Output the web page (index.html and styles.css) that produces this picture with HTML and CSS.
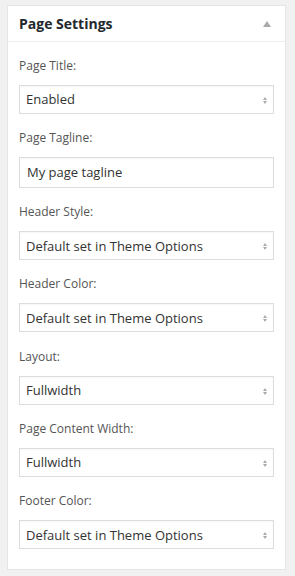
FILE: index.html
```html
<!DOCTYPE html>
<html lang="en">
<head>
    <meta charset="UTF-8">
    <title>Page Settings</title>
    <link rel="stylesheet" href="styles.css">
</head>
<body>
    <div class="postbox">
        <div class="postbox-header">
            <h3>Page Settings</h3>
            <span class="toggle"></span>
        </div>
        <div class="inside">
            <div class="field">
                <label for="page-title">Page Title:</label>
                <div class="select-wrap">
                    <select id="page-title">
                        <option>Enabled</option>
                        <option>Disabled</option>
                    </select>
                </div>
            </div>
            <div class="field">
                <label for="page-tagline">Page Tagline:</label>
                <input type="text" id="page-tagline" value="My page tagline">
            </div>
            <div class="field">
                <label for="header-style">Header Style:</label>
                <div class="select-wrap">
                    <select id="header-style">
                        <option>Default set in Theme Options</option>
                    </select>
                </div>
            </div>
            <div class="field">
                <label for="header-color">Header Color:</label>
                <div class="select-wrap">
                    <select id="header-color">
                        <option>Default set in Theme Options</option>
                    </select>
                </div>
            </div>
            <div class="field">
                <label for="layout">Layout:</label>
                <div class="select-wrap">
                    <select id="layout">
                        <option>Fullwidth</option>
                    </select>
                </div>
            </div>
            <div class="field">
                <label for="content-width">Page Content Width:</label>
                <div class="select-wrap">
                    <select id="content-width">
                        <option>Fullwidth</option>
                    </select>
                </div>
            </div>
            <div class="field">
                <label for="footer-color">Footer Color:</label>
                <div class="select-wrap">
                    <select id="footer-color">
                        <option>Default set in Theme Options</option>
                    </select>
                </div>
            </div>
        </div>
    </div>
</body>
</html>
```

FILE: styles.css
```css
body {
    margin: 5px 9px 0 7px;
    background-color: #f1f1f1;
    font-family: "Open Sans", sans-serif;
    font-size: 12px;
    color: #444;
}
.postbox {
    background-color: #fff;
    border: 1px solid #e5e5e5;
    box-shadow: 0 1px 1px rgba(0, 0, 0, 0.04);
}
.postbox-header {
    display: flex;
    align-items: center;
    justify-content: space-between;
    height: 35px;
    padding: 0 14px 0 11px;
    border-bottom: 1px solid #eee;
}
.postbox-header h3 {
    margin: 0;
    font-size: 14px;
    font-weight: 700;
    color: #23282d;
    line-height: 1;
}
.toggle {
    width: 0;
    height: 0;
    border-left: 4px solid transparent;
    border-right: 4px solid transparent;
    border-bottom: 6px solid #aaa;
    margin-top: 1px;
}
.inside {
    padding: 14.5px 11px 20px;
}
.field + .field {
    margin-top: 15.25px;
}
label {
    display: block;
    line-height: 18px;
    margin-bottom: 10px;
    color: #555;
}
.select-wrap {
    position: relative;
}
.select-wrap::before,
.select-wrap::after {
    content: "";
    position: absolute;
    right: 7px;
    width: 0;
    height: 0;
    border-left: 2.5px solid transparent;
    border-right: 2.5px solid transparent;
    pointer-events: none;
}
.select-wrap::before {
    top: 12px;
    border-bottom: 3px solid #aaa;
}
.select-wrap::after {
    top: 16px;
    border-top: 3px solid #aaa;
}
select,
input[type="text"] {
    display: block;
    box-sizing: border-box;
    width: 100%;
    margin: 0;
    padding: 0 6px;
    border: 1px solid #ddd;
    border-radius: 0;
    background-color: #fff;
    font-family: "Open Sans", sans-serif;
    font-size: 13px;
    color: #333;
    box-shadow: inset 0 1px 2px rgba(0, 0, 0, 0.04);
    outline: none;
}
select {
    height: 29px;
    -webkit-appearance: none;
    appearance: none;
}
input[type="text"] {
    height: 31px;
    padding: 0 7px;
}
```
